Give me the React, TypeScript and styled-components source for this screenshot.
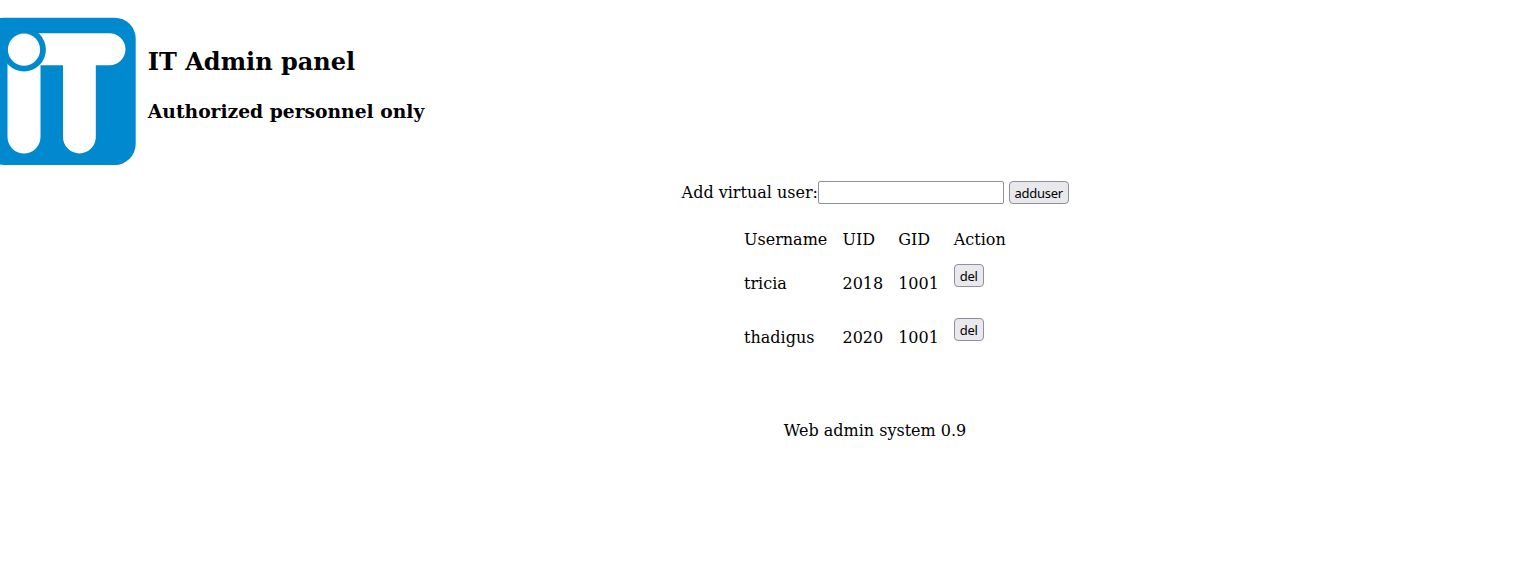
import React from "react";
import styled, { createGlobalStyle } from "styled-components";

const GlobalStyle = createGlobalStyle`
  body { margin: 0; background: #fff; color: #000; font: 16px/19px "DejaVu Serif", serif; }
`;
const Header = styled.header`
  display: flex;
  height: 181px;
`;
const Logo = styled.svg`
  display: block;
  flex: none;
  width: 136px;
  height: 148px;
  margin: 17px 11.8px 0 0;
`;
const Title = styled.h1`
  margin: 47px 0 0;
  font-size: 24px;
  line-height: 29px;
`;
const Subtitle = styled.h2`
  margin: 24px 0 0;
  font-size: 18.72px;
  line-height: 23px;
`;
const Main = styled.main`
  display: flex;
  flex-direction: column;
  align-items: center;
  margin-left: 221px;
`;
const AddForm = styled.form`
  display: flex;
  align-items: center;
  height: 23px;
`;
const Label = styled.label`
  margin: 0 -0.3px 0 0.3px;
`;
const NameInput = styled.input`
  box-sizing: border-box;
  width: 186px;
  height: 23px;
  margin: 0 5px 0 0;
  padding: 1px 2px;
  border: 1px solid #8f8f9d;
  border-radius: 2px;
  background: #fff;
  outline: none;
`;
const Button = styled.button<{ $width: number }>`
  box-sizing: border-box;
  display: block;
  width: ${(p) => p.$width}px;
  height: 23px;
  margin: 0;
  padding: 1px 0 0;
  border: 1px solid #8f8f9d;
  border-radius: 4px;
  background: #e9e9ed;
  color: #000;
  font: 13px/18px "Noto Sans", sans-serif;
  letter-spacing: -0.25px;
`;
const Users = styled.div`
  display: grid;
  grid-template-columns: 98.5px 55.7px 55.5px 52.3px;
  grid-template-rows: 19px 39px 39px;
  align-items: start;
  row-gap: 15px;
  margin-top: 26px;
  width: 262px;
`;
const Cell = styled.div<{ $row?: boolean }>`
  padding-top: ${(p) => (p.$row ? 10 : 0)}px;
`;
const Footer = styled.footer`
  margin-top: 64px;
`;

const users = [
  { name: "tricia", uid: 2018, gid: 1001 },
  { name: "thadigus", uid: 2020, gid: 1001 },
];

export default function App() {
  return (
    <>
      <GlobalStyle />
      <Header>
        <Logo viewBox="0 17 136 148">
          <rect x="-17" y="17.7" width="152.7" height="147.3" rx="21" fill="#0089cf" />
          <path d="M38 33.3H109.5A16 16 0 0 1 109.5 65.3H95.8V137A16.4 16.4 0 0 1 63 137V65.3H40.5V137A16.5 16.5 0 0 1 7.5 137V62Z" fill="#fff" />
          <circle cx="24" cy="49.6" r="21.9" fill="#0089cf" />
          <circle cx="24" cy="49.6" r="16.1" fill="#fff" />
        </Logo>
        <div>
          <Title>IT Admin panel</Title>
          <Subtitle>Authorized personnel only</Subtitle>
        </div>
      </Header>
      <Main>
        <AddForm onSubmit={(e) => e.preventDefault()}>
          <Label htmlFor="username">Add virtual user:</Label>
          <NameInput id="username" />
          <Button $width={60}>adduser</Button>
        </AddForm>
        <Users>
          <Cell>Username</Cell>
          <Cell>UID</Cell>
          <Cell>GID</Cell>
          <Cell>Action</Cell>
          {users.map((u) => (
            <React.Fragment key={u.name}>
              <Cell $row>{u.name}</Cell>
              <Cell $row>{u.uid}</Cell>
              <Cell $row>{u.gid}</Cell>
              <Button $width={30}>del</Button>
            </React.Fragment>
          ))}
        </Users>
        <Footer>Web admin system 0.9</Footer>
      </Main>
    </>
  );
}
